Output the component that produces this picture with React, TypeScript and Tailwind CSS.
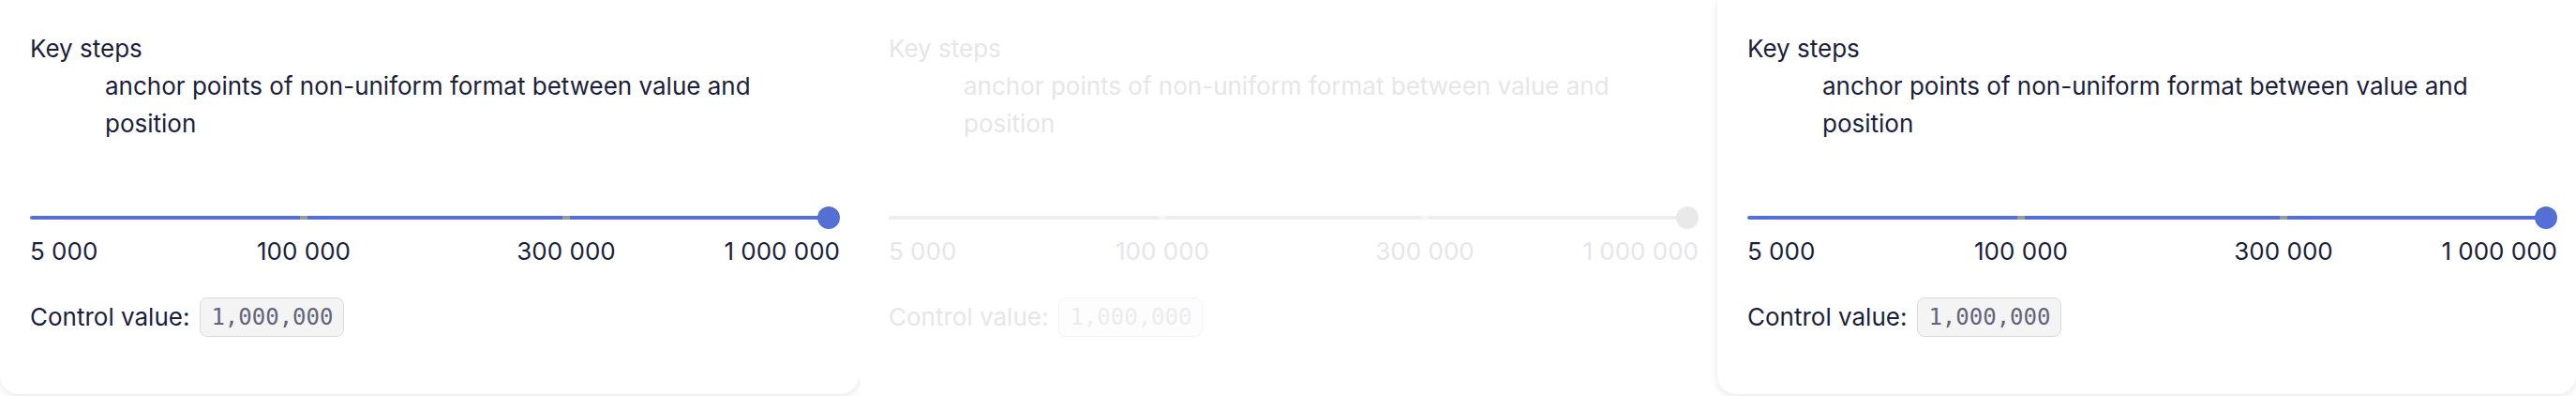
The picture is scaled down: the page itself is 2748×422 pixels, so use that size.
const marks = [
  { label: "5 000", pos: 0 },
  { label: "100 000", pos: 1 / 3 },
  { label: "300 000", pos: 2 / 3 },
  { label: "1 000 000", pos: 1 },
];

function StepSlider({ disabled }: { disabled?: boolean }) {
  const track = disabled ? "bg-[#eeeeee]" : "bg-[#5470d4]";
  const tick = disabled ? "bg-[#f6f6f6]" : "bg-[#999999]";
  const thumb = disabled ? "bg-[#e9e9e9]" : "bg-[#5470d4]";
  const text = disabled ? "text-[#e6e6e8]" : "text-[#1c1f3b]";

  return (
    <div className="mt-[68px]">
      <div className="relative h-6 w-[864px]">
        <div className={`absolute left-0 right-3 top-[10px] h-1 rounded-full ${track}`} />
        {marks.slice(1, 3).map((m) => (
          <div
            key={m.label}
            className={`absolute top-[10px] h-1 w-2 -translate-x-1/2 ${tick}`}
            style={{ left: 12 + 840 * m.pos }}
          />
        ))}
        <div className={`absolute right-0 top-0 h-6 w-6 rounded-full ${thumb}`} />
      </div>
      <div className={`relative mt-1 h-10 w-[864px] text-[26px] leading-10 ${text}`}>
        {marks.map((m, i) => (
          <span
            key={m.label}
            className={
              i === 0
                ? "absolute left-0 top-0 whitespace-nowrap"
                : i === marks.length - 1
                ? "absolute right-0 top-0 whitespace-nowrap"
                : "absolute top-0 -translate-x-1/2 whitespace-nowrap"
            }
            style={i > 0 && i < marks.length - 1 ? { left: 12 + 840 * m.pos } : undefined}
          >
            {m.label}
          </span>
        ))}
      </div>
    </div>
  );
}

function Card({ disabled }: { disabled?: boolean }) {
  const text = disabled ? "text-[#e6e6e8]" : "text-[#1c1f3b]";
  return (
    <div
      className={`h-[420px] w-[916px] shrink-0 rounded-b-[20px] bg-white pl-8 pr-5 pt-8 ${
        disabled ? "" : "shadow-[0_2px_8px_rgba(0,0,0,0.10)]"
      }`}
    >
      <dl className={`text-[26px] leading-10 ${text}`}>
        <dt>Key steps</dt>
        <dd className="ml-20 w-[720px]">anchor points of non-uniform format between value and position</dd>
      </dl>
      <StepSlider disabled={disabled} />
      <div className={`mt-[29px] flex items-center text-[26px] leading-10 ${text}`}>
        <span>Control value:</span>
        <code
          className={`ml-[11px] rounded-lg border px-[11px] font-['DejaVu_Sans_Mono',monospace] text-[24px] leading-10 ${
            disabled
              ? "border-[#f4f4f4] bg-[#fdfdfd] text-[#ececee]"
              : "border-[#dadada] bg-[#f4f4f5] text-[#62657a]"
          }`}
        >
          1,000,000
        </code>
      </div>
    </div>
  );
}

export default function App() {
  return (
    <div className="flex h-[422px] w-[2748px] overflow-hidden bg-white font-['Inter',sans-serif]">
      <Card />
      <Card disabled />
      <Card />
    </div>
  );
}
